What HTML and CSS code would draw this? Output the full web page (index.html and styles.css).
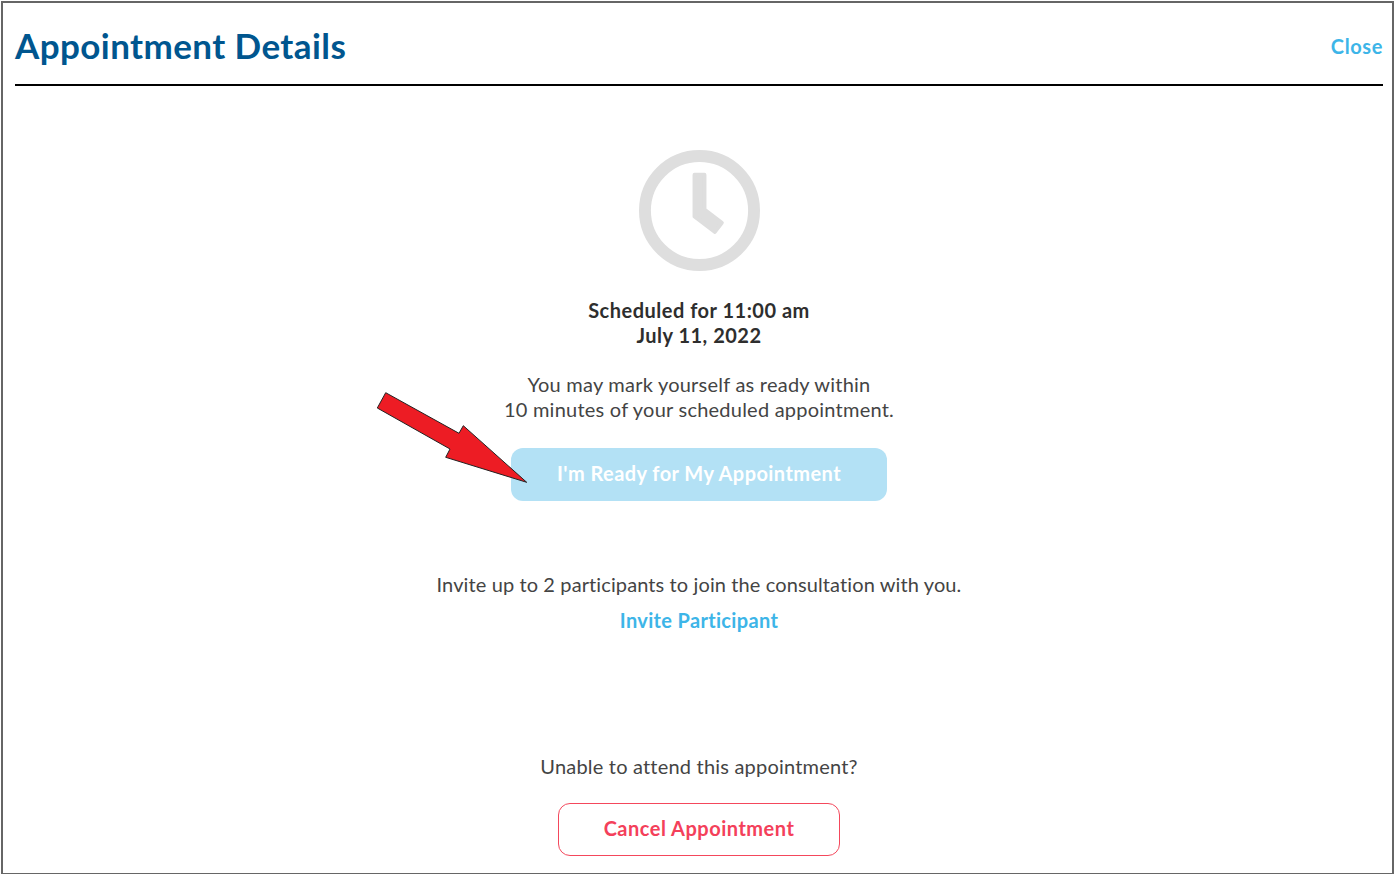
FILE: index.html
```html
<!DOCTYPE html>
<html lang="en">
<head>
    <meta charset="UTF-8">
    <meta name="viewport" content="width=device-width, initial-scale=1.0">
    <title>Appointment Details</title>
    <link rel="stylesheet" href="styles.css">
</head>
<body>
    <div class="modal">
        <div class="modal-header">
            <h1>Appointment Details</h1>
            <a class="close-link" href="#">Close</a>
        </div>

        <div class="modal-body">
            <svg class="clock" width="121" height="121" viewBox="0 0 122 122">
                <circle cx="61" cy="61" r="55" fill="none" stroke="#dedede" stroke-width="12"/>
                <path d="M56 25H66V60L83.5 73.5L76.5 82.5L56 67Z" fill="#dedede" stroke="#dedede" stroke-width="4" stroke-linejoin="round"/>
            </svg>

            <p class="schedule">Scheduled for 11:00 am<br>July 11, 2022</p>
            <p class="note">You may mark yourself as ready within<br>10 minutes of your scheduled appointment.</p>
            <button class="ready-button">I'm Ready for My Appointment</button>

            <p class="invite-text">Invite up to 2 participants to join the consultation with you.</p>
            <a class="invite-link" href="#">Invite Participant</a>

            <p class="unable-text">Unable to attend this appointment?</p>
            <button class="cancel-button">Cancel Appointment</button>
        </div>
    </div>

    <!-- annotation arrow on top of the screenshot -->
    <svg class="arrow" width="160" height="100" viewBox="0 0 160 100">
        <path d="M9.7 1.7L1.3 17L74 58L69.7 66.3L150.7 91.3L87.3 34.7L83 42.3Z" fill="#ed1c24" stroke="#222" stroke-width="1"/>
    </svg>
</body>
</html>
```

FILE: styles.css
```css
body {
    margin: 0;
    padding: 1px 2px 2px 1px;
    background-color: #fff;
    font-family: 'Lato', 'Open Sans', sans-serif;
    color: #444;
}

/* Modal frame */
.modal {
    height: 873px;
    border: 2px solid #666;
    border-bottom-width: 1px;
    box-sizing: border-box;
    padding: 0 9px 0 12px;
    background-color: #fff;
    overflow: hidden;
}

.modal-header {
    height: 81px;
    display: flex;
    justify-content: space-between;
    align-items: center;
    border-bottom: 2px solid #000;
}

.modal-header h1 {
    margin: 3px 0 0;
    font-size: 35px;
    font-weight: 700;
    letter-spacing: 0.42px;
    color: #00568f;
}

.close-link {
    margin-top: 5px;
    font-size: 20px;
    font-weight: 700;
    letter-spacing: 0.6px;
    color: #3db5e8;
    text-decoration: none;
}

/* Modal content */
.modal-body {
    display: flex;
    flex-direction: column;
    align-items: center;
    text-align: center;
    font-size: 20px;
    line-height: 25px;
    letter-spacing: 0.11px;
}

.modal-body p {
    margin: 0;
}

.clock {
    margin-top: 64px;
}

.modal-body .schedule {
    margin-top: 27px;
    font-weight: 700;
    letter-spacing: 0.5px;
    color: #2e2e2e;
}

.modal-body .note {
    margin-top: 24px;
    letter-spacing: 0.23px;
}

.ready-button {
    width: 376px;
    height: 53px;
    margin-top: 26px;
    padding-bottom: 4px;
    border: none;
    border-radius: 12px;
    background-color: #b3e1f5;
    color: #fff;
    font-family: inherit;
    font-size: 20px;
    font-weight: 700;
    letter-spacing: 0.43px;
}

.modal-body .invite-text {
    margin-top: 71px;
}

.invite-link {
    margin-top: 11px;
    font-weight: 700;
    letter-spacing: 0.33px;
    color: #3db5e8;
    text-decoration: none;
}

.modal-body .unable-text {
    margin-top: 121px;
    letter-spacing: 0.2px;
}

.cancel-button {
    width: 282px;
    height: 53px;
    margin-top: 24px;
    padding-bottom: 4px;
    border: 1px solid #f4485c;
    border-radius: 12px;
    background-color: #fff;
    color: #f4405a;
    font-family: inherit;
    font-size: 20px;
    font-weight: 700;
    letter-spacing: 0.5px;
}

.arrow {
    position: absolute;
    left: 376px;
    top: 391px;
}
```
